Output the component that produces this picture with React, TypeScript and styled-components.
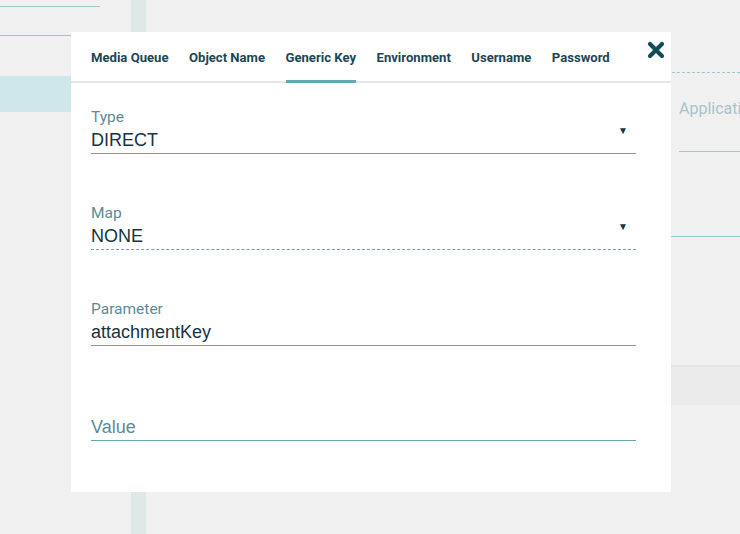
import React from "react";
import styled, { createGlobalStyle } from "styled-components";

const GlobalStyle = createGlobalStyle`
    html, body {
        margin: 0;
        padding: 0;
        background: #f0f0f0;
        font-family: Roboto, "Liberation Sans", sans-serif;
    }
    #root {
        width: 740px;
        height: 534px;
        overflow: hidden;
    }
`;

const Page = styled.div`
    position: relative;
    width: 740px;
    height: 534px;
    display: flex;
    background: #f0f0f0;
    overflow: hidden;
`;

const Sidebar = styled.div`
    flex: 0 0 131px;
    display: flex;
    flex-direction: column;
`;

const SideRule = styled.div<{ $top: number; $width: number }>`
    margin-top: ${p => p.$top}px;
    width: ${p => p.$width}px;
    height: 1px;
    background: #9cc7cd;
`;

const SideActive = styled.div`
    margin-top: 40px;
    height: 36px;
    background: #cfe6ea;
`;

const Strip = styled.div`
    flex: 0 0 15px;
    background: #dde8e8;
`;

const Main = styled.div`
    flex: 1;
    min-width: 0;
    display: flex;
    flex-direction: column;
    overflow: hidden;
`;

const DashedRule = styled.div`
    margin-top: 72px;
    border-top: 1px dashed #9cc7cd;
`;

const BgField = styled.div`
    margin-left: 533px;
    padding-top: 26px;
    height: 52px;
    border-bottom: 1px solid #9cc7cd;
    font-size: 16px;
    color: #a9c4c9;
    white-space: nowrap;
    overflow: hidden;
`;

const BgRule = styled.div`
    margin-top: 84px;
    height: 1px;
    background: #9cc7cd;
`;

const BgBar = styled.div`
    margin-top: 128px;
    height: 38px;
    background: #ebebeb;
    border-top: 2px solid #e4e4e4;
`;

const Modal = styled.div`
    position: absolute;
    left: 71px;
    top: 32px;
    width: 600px;
    height: 460px;
    background: #ffffff;
    display: flex;
    flex-direction: column;
`;

const TabBar = styled.div`
    position: relative;
    height: 49px;
    padding: 0 20px;
    display: flex;
    gap: 20.5px;
    border-bottom: 2px solid #e6e6e6;
`;

const Tab = styled.div<{ $active?: boolean }>`
    display: flex;
    align-items: center;
    font-size: 13.1px;
    font-weight: 700;
    color: #1d4654;
    white-space: nowrap;
    box-shadow: ${p => (p.$active ? "inset 0 -3px 0 #63a9b4" : "none")};
    margin-bottom: -2px;
`;

const Close = styled.button`
    position: absolute;
    right: 6px;
    top: 9px;
    width: 18px;
    height: 18px;
    padding: 0;
    border: 0;
    background: none;
    cursor: pointer;
    display: flex;
`;

const Form = styled.div`
    padding: 25px 35px 0 20px;
    display: flex;
    flex-direction: column;
    gap: 50px;
`;

const Field = styled.div<{ $dashed?: boolean }>`
    position: relative;
    display: flex;
    flex-direction: column;
    border-bottom: 1px ${p => (p.$dashed ? "dashed" : "solid")} #6aa3ad;
`;

const Label = styled.div`
    font-size: 15.5px;
    line-height: 18px;
    color: #5a8c98;
`;

const Value = styled.div`
    margin-top: 3px;
    font-family: "Liberation Sans", Arial, sans-serif;
    font-size: 18px;
    line-height: 22px;
    padding-bottom: 2px;
    color: #17333e;
`;

const Placeholder = styled.div`
    padding: 20px 0 2px;
    font-family: "Liberation Sans", Arial, sans-serif;
    font-size: 18px;
    line-height: 22px;
    color: #5a8c98;
`;

const Caret = styled.span`
    position: absolute;
    right: 8px;
    top: 17px;
    font-size: 10px;
    color: #123a45;
`;

const tabs = ["Media Queue", "Object Name", "Generic Key", "Environment", "Username", "Password"];

export default function App() {
    return (
        <>
            <GlobalStyle />
            <Page>
                <Sidebar>
                    <SideRule $top={6} $width={100} />
                    <SideRule $top={28} $width={131} />
                    <SideActive />
                </Sidebar>
                <Strip />
                <Main>
                    <DashedRule />
                    <BgField>Applicati</BgField>
                    <BgRule />
                    <BgBar />
                </Main>

                <Modal>
                    <TabBar>
                        {tabs.map(t => (
                            <Tab key={t} $active={t === "Generic Key"}>{t}</Tab>
                        ))}
                        <Close aria-label="close">
                            <svg width="18" height="18" viewBox="0 0 18 18">
                                <path d="M3 3 L15 15 M15 3 L3 15" stroke="#0f4c57" strokeWidth="4.2" strokeLinecap="round" />
                            </svg>
                        </Close>
                    </TabBar>
                    <Form>
                        <Field>
                            <Label>Type</Label>
                            <Value>DIRECT</Value>
                            <Caret>▼</Caret>
                        </Field>
                        <Field $dashed>
                            <Label>Map</Label>
                            <Value>NONE</Value>
                            <Caret>▼</Caret>
                        </Field>
                        <Field>
                            <Label>Parameter</Label>
                            <Value>attachmentKey</Value>
                        </Field>
                        <Field>
                            <Placeholder>Value</Placeholder>
                        </Field>
                    </Form>
                </Modal>
            </Page>
        </>
    );
}
